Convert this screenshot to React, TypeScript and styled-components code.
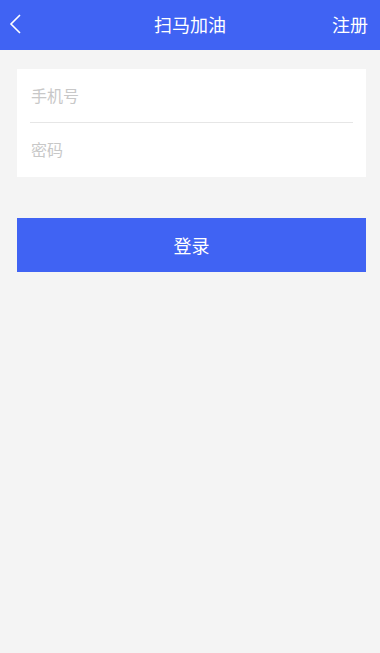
import React from 'react';
import styled, { createGlobalStyle } from 'styled-components';

const GlobalStyle = createGlobalStyle`
  html, body {
    margin: 0;
    padding: 0;
    background: #f4f4f4;
    font-family: "Noto Sans CJK SC", "Noto Sans", sans-serif;
  }
  * { box-sizing: border-box; }
`;

const Page = styled.div`
  min-height: 653px;
  background: #f4f4f4;
`;

const NavBar = styled.header`
  height: 50px;
  background: #4063f3;
  display: grid;
  grid-template-columns: 60px 1fr 60px;
  align-items: center;
  color: #fff;
  padding-bottom: 3px;
`;

const BackButton = styled.button`
  background: none;
  border: 0;
  padding: 0 0 0 9px;
  display: flex;
  align-items: center;
  cursor: pointer;
`;

const Title = styled.h1`
  margin: 0;
  text-align: center;
  font-size: 18px;
  font-weight: 400;
`;

const NavAction = styled.span`
  text-align: right;
  font-size: 18px;
  padding-right: 12px;
`;

const Content = styled.main`
  padding: 19px 14px 0 17px;
`;

const Card = styled.div`
  background: #fff;
  padding: 0 13px;
`;

const Field = styled.input<{ $last?: boolean }>`
  display: block;
  width: 100%;
  height: ${({ $last }) => ($last ? '54px' : '54px')};
  border: 0;
  border-bottom: ${({ $last }) => ($last ? 'none' : '1px solid #e6e6e6')};
  outline: none;
  font-family: inherit;
  font-size: 16px;
  color: #333;
  padding: 0 1px 2px;
  background: transparent;

  &::placeholder {
    color: #c8c8c8;
  }
`;

const SubmitButton = styled.button`
  display: block;
  width: 100%;
  height: 54px;
  margin-top: 41px;
  border: 0;
  background: #4063f3;
  color: #fff;
  font-family: inherit;
  font-size: 18px;
  cursor: pointer;
  padding-bottom: 1px;
`;

export default function App() {
  return (
    <>
      <GlobalStyle />
      <Page>
        <NavBar>
          <BackButton aria-label="返回">
            <svg width="14" height="20" viewBox="0 0 14 20" fill="none">
              <path d="M11 1 L2 10 L11 19" stroke="#fff" strokeWidth="1.6" />
            </svg>
          </BackButton>
          <Title>扫马加油</Title>
          <NavAction>注册</NavAction>
        </NavBar>
        <Content>
          <Card>
            <Field placeholder="手机号" />
            <Field $last type="password" placeholder="密码" />
          </Card>
          <SubmitButton>登录</SubmitButton>
        </Content>
      </Page>
    </>
  );
}
